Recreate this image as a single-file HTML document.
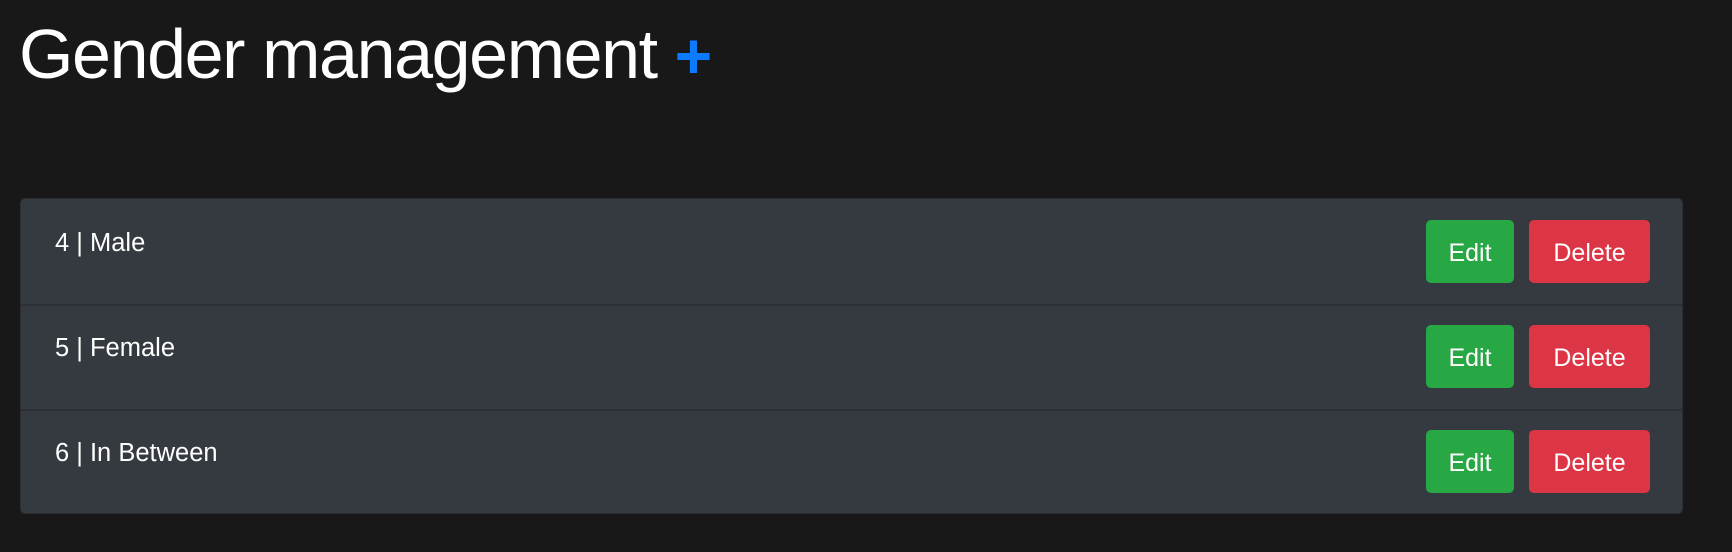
<!DOCTYPE html>
<html><head><style>
body{margin:0;background:#181818;width:1732px;height:552px;overflow:hidden;font-family:"Liberation Sans",sans-serif;color:#fff}
h1{position:absolute;left:19px;top:14px;margin:0;font-weight:400;font-size:70px;line-height:80px;letter-spacing:-1.4px}
h1 span{color:#0d7bff;font-weight:700;font-size:64px;letter-spacing:0}
.card{position:absolute;left:20px;top:198px;width:1663px;height:316px;background:#343a40;border:1px solid #2b2f34;border-radius:5px;box-sizing:border-box}
.row{position:absolute;left:0;width:100%;height:105px;border-bottom:2px solid #2c3035}
.row:last-child{border-bottom:none}
.t{position:absolute;left:34px;top:29px;font-size:25.5px;line-height:30px}
.b{position:absolute;top:21px;height:63px;border-radius:5px;font-size:25px;line-height:66px;text-align:center}
.e{left:1405px;width:88px;background:#28a745}
.d{left:1508px;width:121px;background:#dc3545}
</style></head><body>
<h1>Gender management <span>+</span></h1>
<div class="card">
<div class="row" style="top:0"><div class="t">4 | Male</div><div class="b e">Edit</div><div class="b d">Delete</div></div>
<div class="row" style="top:105px"><div class="t">5 | Female</div><div class="b e">Edit</div><div class="b d">Delete</div></div>
<div class="row" style="top:210px"><div class="t">6 | In Between</div><div class="b e">Edit</div><div class="b d">Delete</div></div>
</div>
</body></html>
